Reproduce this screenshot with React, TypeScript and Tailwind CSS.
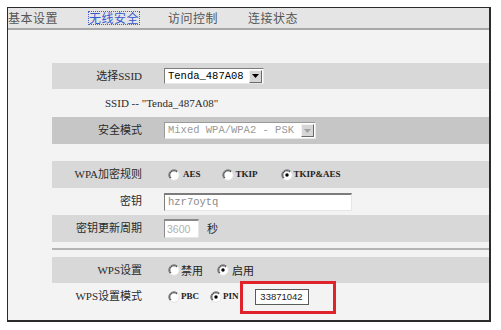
import React from "react";

const Radio = ({ checked }: { checked?: boolean }) => (
  <svg width="12" height="12" viewBox="0 0 12 12" className="shrink-0">
    <circle cx="6" cy="6" r="5.2" fill="#ffffff" />
    <path d="M2.3 9.7 A5.2 5.2 0 0 1 9.7 2.3" fill="none" stroke="#7a7a7a" strokeWidth="1" />
    <path d="M3 9 A4.2 4.2 0 0 1 9 3" fill="none" stroke="#3a3a3a" strokeWidth="1" />
    <path d="M9.7 2.3 A5.2 5.2 0 0 1 2.3 9.7" fill="none" stroke="#e4e4e4" strokeWidth="1" />
    {checked && <circle cx="6" cy="6" r="1.7" fill="#000000" />}
  </svg>
);

const Arrow = ({ disabled }: { disabled?: boolean }) => (
  <div className="w-[13px] h-[13px] mr-[1px] bg-[#d6d6d6] border-t border-l border-t-[#f4f4f4] border-l-[#f4f4f4] border-b border-r border-b-[#6a6a6a] border-r-[#6a6a6a] flex items-center justify-center">
    <svg width="7" height="4" viewBox="0 0 7 4">
      <path d="M0 0 L7 0 L3.5 4 Z" fill={disabled ? "#a0a0a0" : "#000000"} />
    </svg>
  </div>
);

const lbl = "font-['Liberation_Serif','Noto_Sans_CJK_SC',serif] text-[11px] text-[#2a2a2a]";
const rlbl = "font-['Liberation_Serif',serif] text-[9px] text-[#222] font-semibold";
const cjk = "font-['Noto_Sans_CJK_SC',sans-serif] text-[11px] text-[#222]";

const Row = ({
  label,
  cls,
  children,
}: {
  label: string;
  cls: string;
  children?: React.ReactNode;
}) => (
  <div className={`flex items-center ${cls}`}>
    <div className={`w-[90px] text-right leading-none ${lbl}`}>{label}</div>
    <div className="pl-[22px] flex items-center">{children}</div>
  </div>
);

export default function App() {
  return (
    <div className="relative w-[501px] h-[330px] bg-white pt-[7px] pl-[7px] overflow-hidden">
      <div className="w-[484px] h-[315px] flex flex-col border-t border-l border-r-2 border-b-2 border-[#2b2b2b]">
        <div className="h-[22px] shrink-0 bg-[#e5e5e5] border-b-2 border-[#a8a8a8] flex items-center font-['Noto_Sans_CJK_SC',sans-serif] text-[12px] tracking-[0.5px] text-[#555]">
          <div className="w-[80px] leading-none">基本设置</div>
          <div className="w-[80px] leading-none">
            <span className="inline-block border border-dotted border-[#3b63d6] text-[#3458cf] leading-[12px]">
              无线安全
            </span>
          </div>
          <div className="w-[80px] leading-none">访问控制</div>
          <div className="w-[80px] leading-none">连接状态</div>
        </div>
        <div className="flex-1 bg-[#f3f3f3] pt-[33px]">
          <div className="ml-[44px] flex flex-col">
            <Row label="选择SSID" cls="h-[26px] bg-[#d8d8d8]">
              <div className="w-[100px] h-[16px] bg-white border-t border-l border-[#7c7c7c] border-b border-r border-b-[#e8e8e8] border-r-[#e8e8e8] flex items-center justify-between">
                <span className="pl-[3px] font-['Liberation_Mono',monospace] text-[10.5px] text-black leading-none">
                  Tenda_487A08
                </span>
                <Arrow />
              </div>
            </Row>
            <div className="h-[28px] flex items-center pl-[53px]">
              <span className={`${lbl} leading-none text-[11.5px]`}>SSID -- "Tenda_487A08"</span>
            </div>
            <Row label="安全模式" cls="h-[27px] bg-[#c6c6c6]">
              <div className="w-[152px] h-[17px] bg-white border-t border-l border-[#9a9a9a] border-b border-r border-b-[#e8e8e8] border-r-[#e8e8e8] flex items-center justify-between">
                <span className="pl-[3px] font-['Liberation_Mono',monospace] text-[10.5px] text-[#9a9a9a] leading-none">
                  Mixed WPA/WPA2 - PSK
                </span>
                <Arrow disabled />
              </div>
            </Row>
            <div className="h-[17px]" />
            <Row label="WPA加密规则" cls="h-[27px] bg-[#d8d8d8]">
              <div className="ml-[4px] flex items-center gap-[3px]">
                <Radio />
                <span className={rlbl}>AES</span>
              </div>
              <div className="ml-[21px] flex items-center gap-[2px]">
                <Radio />
                <span className={rlbl}>TKIP</span>
              </div>
              <div className="ml-[23px] flex items-center gap-[1px]">
                <Radio checked />
                <span className={rlbl}>TKIP&amp;AES</span>
              </div>
            </Row>
            <Row label="密钥" cls="h-[27px]">
              <div className="w-[188px] h-[18px] bg-white border-t-2 border-l border-[#7c7c7c] border-b border-r border-b-[#e6e6e6] border-r-[#e6e6e6] flex items-center">
                <span className="pl-[3px] font-['Liberation_Mono',monospace] text-[10.5px] text-[#8a8a8a] leading-none">
                  hzr7oytq
                </span>
              </div>
            </Row>
            <Row label="密钥更新周期" cls="h-[27px] bg-[#d8d8d8]">
              <div className="w-[35px] h-[19px] bg-white border-t-2 border-l border-[#8a8a8a] border-b border-r border-b-[#e6e6e6] border-r-[#e6e6e6] flex items-center">
                <span className="pl-[2px] font-['Liberation_Sans',sans-serif] text-[10.5px] text-[#b0b0b0] leading-none">
                  3600
                </span>
              </div>
              <span className={`ml-[8px] ${cjk}`}>秒</span>
            </Row>
            <div className="h-[6px]" />
            <div className="h-[2px] bg-[#b4b4b4]" />
            <div className="h-[7px]" />
            <Row label="WPS设置" cls="h-[26px] bg-[#d8d8d8]">
              <div className="ml-[4px] flex items-center gap-[1px]">
                <Radio />
                <span className={cjk}>禁用</span>
              </div>
              <div className="ml-[14px] flex items-center gap-[3px]">
                <Radio checked />
                <span className={cjk}>启用</span>
              </div>
            </Row>
            <Row label="WPS设置模式" cls="h-[27px]">
              <div className="ml-[4px] flex items-center gap-[1px]">
                <Radio />
                <span className={rlbl}>PBC</span>
              </div>
              <div className="ml-[11px] flex items-center gap-[1px]">
                <Radio checked />
                <span className={rlbl}>PIN</span>
              </div>
              <div className="ml-[16px] w-[54px] h-[16px] bg-white border border-[#5a5a5a] flex items-center justify-center">
                <span className="font-['Liberation_Sans',sans-serif] text-[9.5px] text-[#222] leading-none">
                  33871042
                </span>
              </div>
            </Row>
          </div>
        </div>
      </div>
      <div className="absolute left-[240px] top-[281px] w-[96px] h-[33px] border-[3px] border-[#e0222a]" />
    </div>
  );
}
